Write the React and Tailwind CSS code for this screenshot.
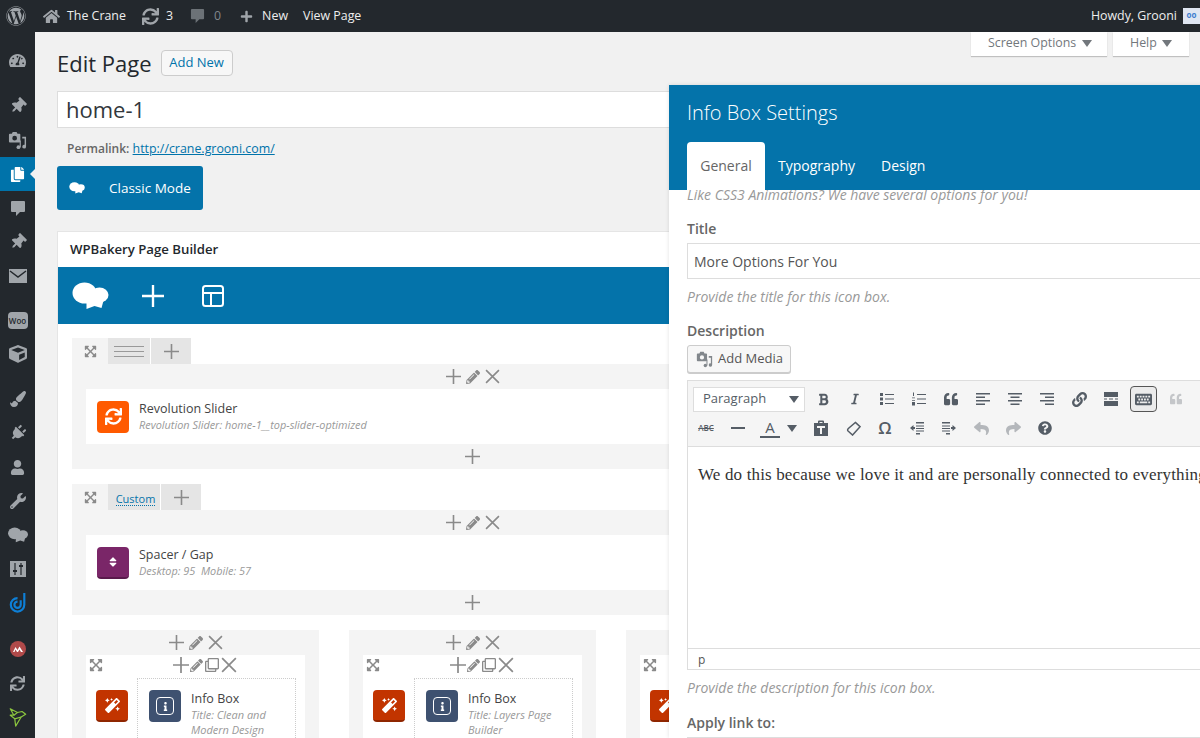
import {
  FaWordpress, FaHome, FaSync, FaPlus, FaTachometerAlt, FaThumbtack, FaCopy,
  FaCube, FaPaintBrush, FaPlug, FaUser, FaWrench, FaMagic, FaPencilAlt,
  FaExpandArrowsAlt, FaBold, FaItalic, FaQuoteLeft, FaLink, FaKeyboard, FaReply, FaShare, FaQuestionCircle,
  FaSort, FaInfo, FaRegClone,
} from 'react-icons/fa';

const BLUE = 'bg-[#0473aa]';

function Cloud({ className }) {
  return (
    <svg viewBox="0 0 36 28" className={className} fill="currentColor">
      <ellipse cx="12" cy="11" rx="12" ry="10.5" />
      <ellipse cx="27" cy="13" rx="9" ry="7.5" />
      <path d="M12 15 L32 15 L29 26 L22 24 L14 27 L14 20 Z" />
    </svg>
  );
}

// triangle used on the dropdown buttons
function Tri({ className = '' }) {
  return (
    <svg viewBox="0 0 10 7" className={`w-[10px] h-[7px] ${className}`} fill="currentColor">
      <path d="M0 0 H10 L5 7 Z" />
    </svg>
  );
}

function Bubble({ className }) {
  return (
    <svg viewBox="0 0 16 17" className={className} fill="currentColor">
      <path d="M2 1 H14 Q15 1 15 2 V11 Q15 12 14 12 H10 L6 16 V12 H2 Q1 12 1 11 V2 Q1 1 2 1 Z" />
    </svg>
  );
}

function MediaIcon({ className }) {
  return (
    <svg viewBox="0 0 20 20" className={className} fill="currentColor">
      <path fillRule="evenodd" d="M2 3 H4 L5 1 H9 L10 3 H12 Q13 3 13 4 V11 Q13 12 12 12 H2 Q1 12 1 11 V4 Q1 3 2 3 Z M7 5 A2.5 2.5 0 1 0 7 10 A2.5 2.5 0 1 0 7 5 Z" />
      <path d="M15 6 H19 V16.5 A2 2 0 1 1 17.5 14.6 V8 H15 Z" />
      <circle cx="11" cy="17" r="2" />
      <path d="M12.3 10 H13.5 V17 H12.3 Z" />
    </svg>
  );
}

function SideItem({ children, active, className = '' }) {
  return (
    <div className={`relative h-[34px] flex items-center justify-center ${active ? 'bg-[#0073aa] text-white' : 'text-[#a0a5aa]'} ${className}`}>
      {children}
      {active && <div className="absolute right-0 top-[12px] w-0 h-0 border-y-[5px] border-y-transparent border-r-[5px] border-r-[#f1f1f1]" />}
    </div>
  );
}

function Sidebar() {
  return (
    <div className="w-[35px] shrink-0 bg-[#23282d] pt-[11px]">
      <SideItem><FaTachometerAlt size={17} /></SideItem>
      <SideItem className="mt-3"><FaThumbtack size={16} className="rotate-45" /></SideItem>
      <SideItem><MediaIcon className="w-[19px] h-[19px]" /></SideItem>
      <SideItem active><FaCopy size={15} /></SideItem>
      <SideItem><Bubble className="w-[16px] h-[17px]" /></SideItem>
      <SideItem><FaThumbtack size={16} className="rotate-45" /></SideItem>
      <SideItem>
        <svg viewBox="0 0 18 14" className="w-[18px] h-[14px]">
          <rect width="18" height="14" fill="#a0a5aa" />
          <path d="M1 2 L9 8 L17 2" fill="none" stroke="#23282d" strokeWidth="1.5" />
        </svg>
      </SideItem>
      <SideItem className="mt-[10px]">
        <div className="relative w-5 h-[17px] rounded-sm bg-[#a0a5aa] text-[#23282d] text-[8px] leading-[17px] text-center font-semibold">Woo</div>
      </SideItem>
      <SideItem><FaCube size={18} /></SideItem>
      <SideItem className="mt-[11px]"><FaPaintBrush size={16} /></SideItem>
      <SideItem><FaPlug size={16} className="rotate-45" /></SideItem>
      <SideItem><FaUser size={15} /></SideItem>
      <SideItem><FaWrench size={16} /></SideItem>
      <SideItem><Cloud className="w-5 h-4" /></SideItem>
      <SideItem>
        <svg viewBox="0 0 16 16" className="w-4 h-4">
          <rect width="16" height="16" fill="#a0a5aa" />
          <path d="M5 2 V14 M11 2 V14" stroke="#23282d" strokeWidth="1.2" />
          <path d="M3 9 H7 V11 H3 Z M9 4 H13 V6 H9 Z" fill="#23282d" />
        </svg>
      </SideItem>
      <SideItem>
        <svg viewBox="0 0 20 24" className="w-[18px] h-[22px]" fill="none" stroke="#0e7fd6" strokeWidth="2.4">
          <path d="M17 1 V14 A7.5 7.5 0 1 1 9.5 6.5" />
          <path d="M13 9 V14 A3.5 3.5 0 1 1 9.5 10.5" />
        </svg>
      </SideItem>
      <SideItem className="mt-3">
        <svg viewBox="0 0 16 16" className="w-4 h-4">
          <circle cx="8" cy="8" r="8" fill="#b04a4a" />
          <path d="M3 11 L5.5 6 L7.5 9 L9.5 5.5 L13 11 H11 L9.5 8.5 L8 11 H7 L5.5 8.5 L4.5 11 Z" fill="#fff" />
        </svg>
      </SideItem>
      <SideItem><FaSync size={15} /></SideItem>
      <SideItem>
        <svg viewBox="0 0 20 22" className="w-[19px] h-[20px]" fill="none" stroke="#8cc63f" strokeWidth="1.3" strokeLinejoin="round">
          <path d="M2 2 L10 6 L15 5 L19 8 L14 11 L8 21 L7 13 L2 9 L6 9 Z" />
          <path d="M6 9 L10 6 M7 13 L14 11" />
        </svg>
      </SideItem>
    </div>
  );
}

function TopBar() {
  return (
    <div className="h-8 shrink-0 bg-[#23282d] text-[#eee] text-[12.4px] flex items-center pl-[6px]">
      <FaWordpress size={20} className="text-[#a0a5aa]" />
      <FaHome size={17} className="ml-[17px] text-[#a0a5aa]" />
      <span className="ml-[7px]">The Crane</span>
      <FaSync size={17} className="ml-[16px] text-[#a0a5aa]" />
      <span className="ml-[7px]">3</span>
      <Bubble className="w-[15px] h-[16px] ml-[17px] text-[#6c7277]" />
      <span className="ml-[9px] text-[#80868b]">0</span>
      <FaPlus size={13} className="ml-[19px] text-[#a0a5aa]" />
      <span className="ml-[9px]">New</span>
      <span className="ml-[15px]">View Page</span>
      <span className="ml-auto">Howdy, Grooni</span>
      <div className="ml-[6px] w-[17px] h-4 bg-[#dfe6f2] text-[#3f7fd0] text-[8px] leading-[14px] text-center font-bold">oo</div>
    </div>
  );
}

function Plus({ size = 14 }) {
  return (
    <svg viewBox="0 0 14 14" width={size} height={size} stroke="currentColor" strokeWidth="1.5">
      <path d="M7 0 V14 M0 7 H14" />
    </svg>
  );
}

function Cross({ size = 14 }) {
  return (
    <svg viewBox="0 0 14 14" width={size} height={size} stroke="currentColor" strokeWidth="1.5">
      <path d="M1 1 L13 13 M13 1 L1 13" />
    </svg>
  );
}

function Controls({ className = '', size = 14 }) {
  return (
    <div className={`flex items-center justify-center gap-[5px] text-[#8a8a8a] ${className}`}>
      <Plus size={size} />
      <FaPencilAlt size={size - 1} />
      <Cross size={size} />
    </div>
  );
}

function ElementCard({ color, icon, title, sub }) {
  return (
    <div className="mx-[14px] h-[55px] bg-white flex items-center pl-[11px]">
      <div className={`w-8 h-8 rounded flex items-center justify-center text-white ${color}`}>{icon}</div>
      <div className="ml-[10px]">
        <div className="text-[12.5px] leading-[16px] text-[#444]">{title}</div>
        <div className="text-[10.9px] leading-[15px] italic text-[#999] whitespace-pre">{sub}</div>
      </div>
    </div>
  );
}

function Row({ tab, tabWidth, children }) {
  return (
    <div>
      <div className="flex h-[26px]">
        <div className="w-[36px] bg-[#f4f4f4] flex items-center justify-center text-[#8a8a8a]"><FaExpandArrowsAlt size={13} /></div>
        <div className={`${tabWidth} bg-[#e5e5e5] flex items-center justify-center`}>{tab}</div>
        <div className="ml-px w-[40px] bg-[#e5e5e5] flex items-center justify-center text-[#8a8a8a]"><Plus size={15} /></div>
      </div>
      <div className="bg-[#f4f4f4] h-[105px]">
        <Controls className="h-[25px]" size={15} />
        {children}
        <div className="h-[25px] flex items-center justify-center text-[#8a8a8a]"><Plus size={15} /></div>
      </div>
    </div>
  );
}

function Column({ title, lines }) {
  return (
    <div className="bg-[#f4f4f4] h-[200px]">
      <Controls className="h-[25px]" size={15} />
      <div className="mx-[14px] bg-white h-[170px] relative">
        <div className="flex items-center justify-center h-5 text-[#8a8a8a]">
          <div className="flex items-center gap-px ml-[18px]">
            <Plus size={16} />
            <FaPencilAlt size={13} />
            <FaRegClone size={14} className="mx-px" />
            <Cross size={16} />
          </div>
        </div>
        <FaExpandArrowsAlt size={14} className="absolute left-[3px] top-[3px] text-[#8a8a8a]" />
        <div className="flex pl-[10px] pt-[3px]">
          <div className="mt-[12px] w-8 h-8 rounded-sm bg-[#c23400] border-b-2 border-[#8f2600] flex items-center justify-center text-white"><FaMagic size={15} /></div>
          <div className="ml-[9px] w-[159px] h-[120px] border border-dotted border-[#ccc] flex pt-[11px] pl-[11px]">
            <div className="w-8 h-8 rounded-sm bg-[#3e5170] flex items-center justify-center text-white shrink-0">
              <div className="w-[18px] h-[18px] rounded-sm border border-white flex items-center justify-center"><FaInfo size={9} /></div>
            </div>
            <div className="ml-[10px] mt-px">
              <div className="text-[12.5px] leading-[15px] text-[#444]">{title}</div>
              <div className="text-[11px] leading-[15px] mt-px italic text-[#999]">{lines[0]}<br />{lines[1]}</div>
            </div>
          </div>
        </div>
      </div>
    </div>
  );
}

function Builder() {
  return (
    <div className="w-[830px] mt-[21px] bg-white border border-[#e5e5e5] border-b-0">
      <div className="h-[35px] flex items-center pl-3 text-[13.2px] font-semibold text-[#23282d]">WPBakery Page Builder</div>
      <div className={`h-[57px] ${BLUE} flex items-center text-white`}>
        <Cloud className="ml-[14px] w-[37px] h-[28px]" />
        <div className="ml-[33px]"><Plus size={22} /></div>
        <svg viewBox="0 0 22 22" className="ml-[38px] w-[22px] h-[22px]" fill="none" stroke="currentColor" strokeWidth="2">
          <rect x="1" y="1" width="20" height="20" rx="2.5" />
          <path d="M1 8 H21 M9 8 V21" />
        </svg>
      </div>
      <div className="pl-[14px] pr-[13px] pt-[14px] flex flex-col gap-[15px]">
        <Row tabWidth="w-[42px]" tab={<div className="w-[30px] h-[11px] border-y border-[#999] relative"><div className="absolute left-0 right-0 top-[4px] h-px bg-[#999]" /></div>}>
          <ElementCard color="bg-[#ff5a00]" icon={<FaSync size={17} />} title="Revolution Slider" sub="Revolution Slider: home-1__top-slider-optimized" />
        </Row>
        <Row tabWidth="w-[52px]" tab={<span className="mt-[4px] ml-[3px] text-[11px] text-[#0473aa] border-b border-dotted border-[#0473aa] leading-[13px]">Custom</span>}>
          <ElementCard color="bg-[#7a2668] border-b-2 border-[#5a1a4c]" icon={<FaSort size={12} />} title="Spacer / Gap" sub="Desktop: 95  Mobile: 57" />
        </Row>
        <div className="grid grid-cols-3 gap-[30px]">
          <Column title="Info Box" lines={['Title: Clean and', 'Modern Design']} />
          <Column title="Info Box" lines={['Title: Layers Page', 'Builder']} />
          <Column title="" lines={['', '']} />
        </div>
      </div>
    </div>
  );
}

function Main() {
  return (
    <div className="flex-1 min-w-0 bg-[#f1f1f1] pl-[22px] overflow-hidden">
      <div className="h-6 flex justify-end pr-[11px] gap-[6px] text-[12.4px] text-[#72777c]">
        <div className="w-[136px] bg-white shadow-[0_1px_1px_rgba(0,0,0,0.2)] flex items-center pl-[17px] gap-[6px] pb-px">Screen Options <Tri /></div>
        <div className="w-[76px] bg-white shadow-[0_1px_1px_rgba(0,0,0,0.2)] flex items-center pl-[17px] gap-[5px] pb-px">Help <Tri /></div>
      </div>
      <div className="flex items-center -mt-[6px] h-[26px]">
        <h1 className="text-[22px] leading-[26px] text-[#23282d]">Edit Page</h1>
        <div className="ml-[9px] h-[26px] w-[72px] border border-[#ccc] rounded-sm bg-[#f7f7f7] text-[13px] text-[#0073aa] flex items-center justify-center">Add New</div>
      </div>
      <div className="mt-[15px] h-[37px] w-[830px] bg-white border border-[#ddd] flex items-center pl-2 text-[22px] text-[#32373c]">home-1</div>
      <div className="mt-[12px] pl-[10px] h-[18px] text-[12.4px] leading-[18px] text-[#666]">
        <span className="font-semibold text-[12px]">Permalink:</span> <span className="text-[#0073aa] underline">http://crane.grooni.com/</span>
      </div>
      <div className={`mt-[8px] w-[146px] h-[44px] rounded-[3px] ${BLUE} text-white text-[13.5px] flex items-center pl-3`}>
        <Cloud className="w-4 h-3" />
        <span className="ml-6">Classic Mode</span>
      </div>
      <Builder />
    </div>
  );
}

function ToolBtn({ children, className = 'w-8' }) {
  return <div className={`h-[26px] shrink-0 flex items-center justify-center text-[#555d66] ${className}`}>{children}</div>;
}

// toolbar glyphs drawn from their strokes, all on a 14 unit box
function Glyph({ children }) {
  return (
    <svg viewBox="0 0 14 14" className="w-[14px] h-[14px]" fill="currentColor">{children}</svg>
  );
}

function Lines({ type }) {
  const paths = {
    left: 'M0 1 H14 V2.5 H0 Z M0 4.5 H9 V6 H0 Z M0 8 H14 V9.5 H0 Z M0 11.5 H9 V13 H0 Z',
    center: 'M0 1 H14 V2.5 H0 Z M2.5 4.5 H11.5 V6 H2.5 Z M0 8 H14 V9.5 H0 Z M2.5 11.5 H11.5 V13 H2.5 Z',
    right: 'M0 1 H14 V2.5 H0 Z M5 4.5 H14 V6 H5 Z M0 8 H14 V9.5 H0 Z M5 11.5 H14 V13 H5 Z',
  };
  return <Glyph><path d={paths[type]} /></Glyph>;
}

function Editor() {
  return (
    <div className="mt-[7px] w-[700px] h-[290px] border border-[#ddd] flex flex-col">
      <div className="h-[66px] shrink-0 bg-[#f5f5f5] border-b border-[#ddd] pt-[5px] pl-[5px]">
        <div className="flex items-center">
          <div className="w-[112px] h-[25px] bg-white border border-[#ddd] flex items-center justify-between pl-[9px] pr-[5px] text-[13px] text-[#555d66]">
            Paragraph <Tri />
          </div>
          <div className="w-[2px]" />
          <ToolBtn><FaBold size={13} /></ToolBtn>
          <ToolBtn><FaItalic size={12} /></ToolBtn>
          <ToolBtn>
            <Glyph><path d="M0 1 H3 V4 H0 Z M0 5.5 H3 V8.5 H0 Z M0 10 H3 V13 H0 Z M5 2 H14 V3 H5 Z M5 6.5 H14 V7.5 H5 Z M5 11 H14 V12 H5 Z" /></Glyph>
          </ToolBtn>
          <ToolBtn>
            <Glyph><path d="M1 0.5 H2 V4 H1 Z M0 5.5 H3 V6.3 H0 Z M0 8.3 H3 V9 H0 Z M0 10 H3 V13.5 H0 Z M5 2 H14 V3 H5 Z M5 6.5 H14 V7.5 H5 Z M5 11 H14 V12 H5 Z" /></Glyph>
          </ToolBtn>
          <ToolBtn><FaQuoteLeft size={14} /></ToolBtn>
          <ToolBtn><Lines type="left" /></ToolBtn>
          <ToolBtn><Lines type="center" /></ToolBtn>
          <ToolBtn><Lines type="right" /></ToolBtn>
          <ToolBtn><FaLink size={15} /></ToolBtn>
          <ToolBtn>
            <Glyph><path d="M0 0 H14 V5 H0 Z M0 9 H14 V14 H0 Z M0 6.5 H3 V7.5 H0 Z M5 6.5 H9 V7.5 H5 Z M11 6.5 H14 V7.5 H11 Z" /></Glyph>
          </ToolBtn>
          <div className="w-[27px] h-[26px] ml-[3px] border border-[#555] rounded-sm bg-[#ebebeb] flex items-center justify-center text-[#555d66]"><FaKeyboard size={17} /></div>
          <ToolBtn className="w-8 ml-[3px] opacity-30"><FaQuoteLeft size={12} /></ToolBtn>
          <ToolBtn className="w-8 opacity-30"><Tri /></ToolBtn>
        </div>
        <div className="flex items-center mt-[3px] -ml-[3px]">
          <ToolBtn><span className="text-[8px] line-through font-semibold">ABC</span></ToolBtn>
          <ToolBtn><div className="w-[14px] h-[2px] bg-[#555d66]" /></ToolBtn>
          <ToolBtn><span className="w-5 text-center text-[15px] leading-[17px] border-b-[2px] border-[#555d66]">A</span></ToolBtn>
          <ToolBtn className="w-3"><Tri /></ToolBtn>
          <div className="w-[7px]" />
          <ToolBtn>
            <svg viewBox="0 0 16 16" className="w-4 h-4" fill="currentColor">
              <path fillRule="evenodd" d="M1 3 H5 V1.5 Q5 0.5 6 0.5 H10 Q11 0.5 11 1.5 V3 H15 V16 H1 Z M6.5 2 V3 H9.5 V2 Z M4 6 V8 H7 V14 H9 V8 H12 V6 Z" />
            </svg>
          </ToolBtn>
          <ToolBtn>
            <svg viewBox="0 0 16 16" className="w-[15px] h-[15px]" fill="none" stroke="currentColor" strokeWidth="1.6">
              <path d="M10 1.5 L15 6 L7 15 L2.5 11 Q1 9.5 2.5 8 Z" />
            </svg>
          </ToolBtn>
          <ToolBtn><span className="text-[17px] font-semibold">Ω</span></ToolBtn>
          <ToolBtn>
            <Glyph><path d="M6 1 H14 V2.5 H6 Z M6 4.5 H14 V5.5 H6 Z M6 7 H14 V8 H6 Z M6 9.5 H14 V10.5 H6 Z M6 12 H10 V13.5 H6 Z M0 7 L3.5 4 V6 H5 V8 H3.5 V10 Z" /></Glyph>
          </ToolBtn>
          <ToolBtn>
            <Glyph><path d="M0 1 H8 V2.5 H0 Z M0 4.5 H8 V5.5 H0 Z M0 7 H8 V8 H0 Z M0 9.5 H8 V10.5 H0 Z M4 12 H8 V13.5 H4 Z M14 7 L10.5 4 V6 H9 V8 H10.5 V10 Z" /></Glyph>
          </ToolBtn>
          <ToolBtn className="w-8 opacity-40"><FaReply size={15} /></ToolBtn>
          <ToolBtn className="w-8 opacity-40"><FaShare size={15} /></ToolBtn>
          <ToolBtn><FaQuestionCircle size={14} /></ToolBtn>
        </div>
      </div>
      <div className="flex-1 bg-white pl-[10px] pt-[18px] text-[17px] tracking-[0.15px] leading-[20px] text-[#333] whitespace-nowrap font-['Liberation_Serif',serif]">
        We do this because we love it and are personally connected to everything
      </div>
      <div className="h-[21px] border-t border-[#ddd] bg-white pl-[10px] text-[12px] leading-[22px] text-[#555]">p</div>
    </div>
  );
}

function SettingsPanel() {
  return (
    <div className="absolute left-[669px] top-[85px] w-[700px] h-[653px] bg-white shadow-[0_0_4px_rgba(0,0,0,0.12)]">
      <div className={`h-[105px] ${BLUE} flex flex-col justify-between pl-[18px]`}>
        <div className="pt-[14px] text-[20px] leading-[28px] font-light text-white">Info Box Settings</div>
        <div className="flex text-[14px] items-stretch h-[48px]">
          <div className="w-[78px] bg-white rounded-t-[4px] flex items-center justify-center text-[#666] pb-[2px]">General</div>
          <div className="ml-[13px] flex items-center text-white pb-[2px]">Typography</div>
          <div className="ml-[26px] flex items-center text-white pb-[2px]">Design</div>
        </div>
      </div>
      <div className="pl-[18px] overflow-hidden">
        <div className="text-[14px] leading-[10px] italic text-[#999]">Like CSS3 Animations? We have several options for you!</div>
        <div className="mt-[19px] text-[14px] leading-[20px] font-semibold text-[#666]">Title</div>
        <div className="mt-[4px] w-[700px] h-[36px] border border-[#ddd] flex items-center pl-[6px] text-[14px] text-[#555]">More Options For You</div>
        <div className="mt-[9px] text-[14px] leading-[18px] italic text-[#999]">Provide the title for this icon box.</div>
        <div className="mt-[15px] text-[14px] leading-[20px] font-semibold text-[#666]">Description</div>
        <div className="mt-[4px] w-[104px] h-[28px] rounded-[3px] border border-[#ccc] bg-[#f7f7f7] shadow-[0_1px_0_#ccc] flex items-center pl-[8px] gap-[5px] text-[13px] text-[#555]">
          <MediaIcon className="w-[17px] h-[17px] text-[#82878c]" /> Add Media
        </div>
        <Editor />
        <div className="mt-[9px] text-[14px] leading-[18px] italic text-[#999]">Provide the description for this icon box.</div>
        <div className="mt-[16px] text-[14px] leading-[20px] font-semibold text-[#666]">Apply link to:</div>
        <div className="mt-[4px] w-[700px] h-[30px] border border-[#ddd]" />
      </div>
    </div>
  );
}

export default function App() {
  return (
    <div className="relative w-[1200px] h-[738px] overflow-hidden flex flex-col font-['Open_Sans',sans-serif]">
      <TopBar />
      <div className="flex flex-1 min-h-0">
        <Sidebar />
        <Main />
      </div>
      <SettingsPanel />
    </div>
  );
}
